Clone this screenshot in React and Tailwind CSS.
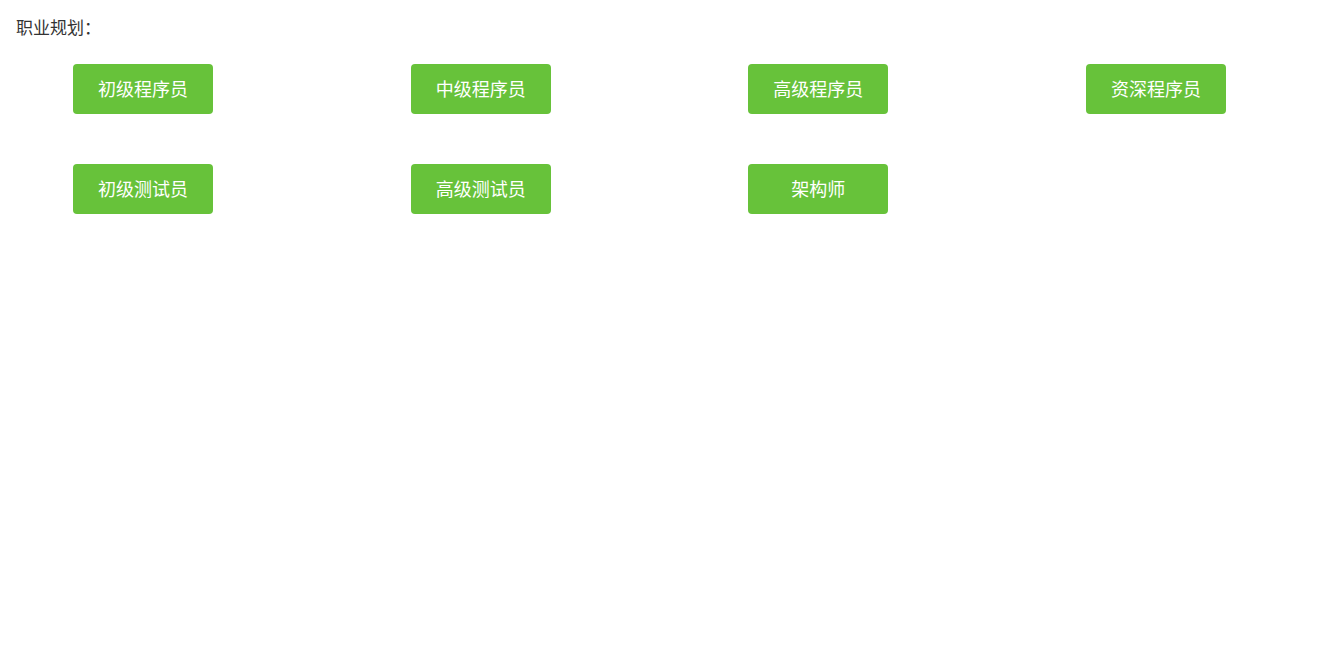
const careers = [
  '初级程序员',
  '中级程序员',
  '高级程序员',
  '资深程序员',
  '初级测试员',
  '高级测试员',
  '架构师',
];

export default function App() {
  return (
    <div
      className="min-h-screen bg-white text-[#333333]"
      style={{ fontFamily: '"Noto Sans CJK SC", "Noto Sans", sans-serif' }}
    >
      <div className="pl-[16px] pt-[15px] text-[17px] leading-[24px]">职业规划：</div>
      <div className="mt-[25px] grid grid-cols-[repeat(4,337.67px)] gap-y-[50.5px] pl-[73px]">
        {careers.map((c) => (
          <button
            key={c}
            className="flex h-[49.5px] w-[140px] items-center justify-center rounded-[4px] bg-[#67c23a] text-[18px] text-white"
          >
            {c}
          </button>
        ))}
      </div>
    </div>
  );
}
